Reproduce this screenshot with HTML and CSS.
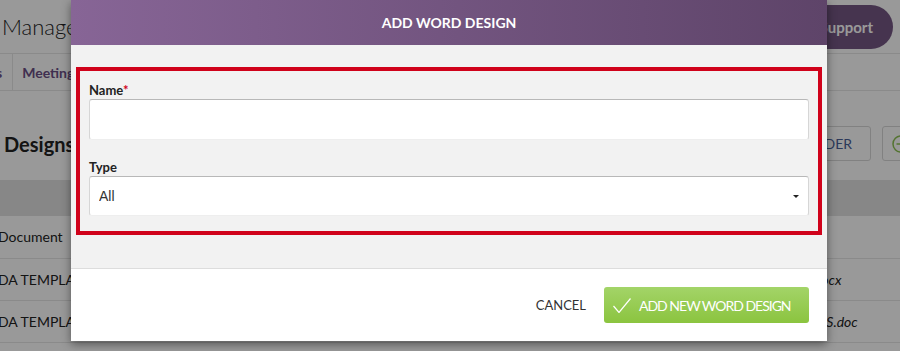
FILE: index.html
```html
<html>

<head>
  <meta name="viewport" content="width=device-width, initial-scale=1.0" />
  <title>Word Designs</title>
  <link rel="stylesheet" href="styles.css">
</head>

<body>
  <div class="app">
    <header class="topbar">
      <span class="app-title">Manager</span>
      <button class="support-btn">Support</button>
    </header>

    <nav class="tabs">
      <a class="tab tab-first">s</a>
      <a class="tab tab-active">Meetings</a>
    </nav>

    <div class="page-head">
      <h1 class="page-title">Designs</h1>
      <div class="actions">
        <button class="btn-outline">ORDER</button>
        <button class="btn-add">
          <svg width="18" height="18" viewBox="0 0 18 18">
            <circle cx="9" cy="9" r="8" fill="none" stroke="#8cc152" stroke-width="1.5" />
            <path d="M9 4.5v9M4.5 9h9" stroke="#8cc152" stroke-width="1.5" />
          </svg>
        </button>
      </div>
    </div>

    <table class="grid">
      <tr class="grid-head"><th></th><th class="col-file"></th></tr>
      <tr><td>Document</td><td class="col-file"></td></tr>
      <tr><td>DA TEMPLATE</td><td class="col-file file-name">Agenda Templates.docx</td></tr>
      <tr><td>DA TEMPLATE</td><td class="col-file file-name">AGENDA TEMPLATES.doc</td></tr>
    </table>
  </div>

  <div class="overlay"></div>

  <div class="modal">
    <div class="modal-header">ADD WORD DESIGN</div>

    <div class="modal-body">
      <div class="highlight">
        <label class="field-label">Name<span class="required">*</span></label>
        <input class="field-input" type="text">

        <label class="field-label field-label-gap">Type</label>
        <div class="select-wrap">
          <select class="field-input field-select">
            <option>All</option>
          </select>
        </div>
      </div>
    </div>

    <div class="modal-footer">
      <button class="btn-cancel">CANCEL</button>
      <button class="btn-primary">
        <svg class="check" width="18" height="15" viewBox="0 0 18 15">
          <path d="M0.5 8 L6 14.5 L17.5 0.5" fill="none" stroke="#fff" stroke-width="1.2" />
        </svg>
        ADD NEW WORD DESIGN
      </button>
    </div>
  </div>
</body>

</html>
```

FILE: styles.css
```css
body {
  margin: 0px;
  height: 351px;
  overflow: hidden;
  font-family: Lato, "Open Sans", sans-serif;
  color: #333;
  background: #fff;
}

* {
  box-sizing: border-box;
}

/* page behind the dialog */

.topbar {
  height: 54px;
  display: flex;
  align-items: center;
  justify-content: space-between;
  padding: 0 7px 0 2px;
  border-bottom: 1px solid #e6e6e6;
}

.app-title {
  font-size: 22px;
  font-weight: 300;
  color: #222;
}

.support-btn {
  height: 44px;
  padding: 0 20px 0 40px;
  border: 0;
  border-radius: 22px;
  background: #755784;
  color: #fff;
  font-family: inherit;
  font-size: 15px;
  font-weight: 700;
}

.tabs {
  height: 37px;
  display: flex;
  border-bottom: 1px solid #e6e6e6;
  margin-left: -4px;
}

.tab {
  display: flex;
  align-items: center;
  padding: 0 9px;
  border-right: 1px solid #e6e6e6;
  font-size: 14px;
  font-weight: 700;
  color: #6b4f86;
}

.tab-first {
  padding-left: 0;
  padding-right: 10px;
}

.page-head {
  height: 89px;
  display: flex;
  align-items: center;
  justify-content: space-between;
  padding: 35px 0 19px 4px;
}

.page-title {
  margin: 0;
  font-size: 20px;
  font-weight: 700;
  color: #222;
}

.actions {
  display: flex;
  gap: 11px;
  margin-right: -20px;
}

.btn-outline,
.btn-add {
  height: 35px;
  border: 1px solid #d8d8d8;
  border-radius: 3px;
  background: #fff;
  font-family: inherit;
}

.btn-outline {
  padding: 0 18px;
  font-size: 14px;
  color: #4a6096;
}

.btn-add {
  width: 38px;
  display: flex;
  align-items: center;
  justify-content: center;
}

.grid {
  width: 100%;
  border-collapse: collapse;
  font-size: 14px;
}

.grid-head th {
  height: 36px;
  background: #e1e1e1;
  padding: 0;
}

.grid td {
  height: 42px;
  border-bottom: 1px solid #e6e6e6;
  color: #222;
  padding: 0;
}

.grid td:first-child {
  text-indent: -2px;
}

.col-file {
  width: 195px;
}

.file-name {
  font-style: italic;
  color: #444;
}

.overlay {
  position: absolute;
  top: 0;
  left: 0;
  right: 0;
  bottom: 0;
  background: rgba(0, 0, 0, 0.4);
}

/* dialog */

.modal {
  position: absolute;
  top: 0;
  left: 71px;
  width: 756px;
  background: #fff;
  box-shadow: 0 3px 9px rgba(0, 0, 0, 0.45);
}

.modal-header {
  height: 45px;
  display: flex;
  align-items: center;
  justify-content: center;
  background: linear-gradient(to right, #876596, #5e4469);
  color: #fff;
  font-size: 14px;
  font-weight: 700;
}

.modal-body {
  background: #f2f2f2;
  padding: 22px 5px 33px;
  border-bottom: 1px solid #ddd;
}

.highlight {
  border: 4px solid #d0021b;
  padding: 11px 9px 15px;
}

.field-label {
  display: block;
  height: 16px;
  font-size: 13px;
  font-weight: 700;
  color: #222;
}

.field-label-gap {
  margin-top: 19px;
}

.required {
  color: #d0021b;
}

.field-input {
  display: block;
  width: 100%;
  height: 41px;
  margin-top: 1px;
  border: 1px solid #d6d6d6;
  border-top-color: #b8b8b8;
  border-bottom-color: #eee;
  border-radius: 3px;
  background: #fff;
  padding: 0 9px;
  font-family: "Liberation Sans", Arial, sans-serif;
  font-size: 14px;
  color: #333;
  outline: none;
}

.select-wrap {
  position: relative;
}

.field-select {
  height: 40px;
  appearance: none;
  -webkit-appearance: none;
}

.select-wrap::after {
  content: "";
  position: absolute;
  right: 10px;
  top: 19px;
  border-left: 3px solid transparent;
  border-right: 3px solid transparent;
  border-top: 3px solid #222;
}

.modal-footer {
  height: 72px;
  display: flex;
  align-items: center;
  justify-content: flex-end;
  gap: 18px;
  padding: 0 18px;
}

.btn-cancel {
  border: 0;
  background: none;
  padding: 0;
  font-family: inherit;
  font-size: 13px;
  color: #333;
}

.btn-primary {
  width: 205px;
  height: 36px;
  display: flex;
  align-items: center;
  gap: 8px;
  padding: 0 0 0 9px;
  border: 0;
  border-radius: 3px;
  background: linear-gradient(#a3d468, #8bc43f);
  color: #fff;
  font-family: inherit;
  font-size: 14px;
  letter-spacing: -1px;
}

.check {
  flex: none;
}
```
